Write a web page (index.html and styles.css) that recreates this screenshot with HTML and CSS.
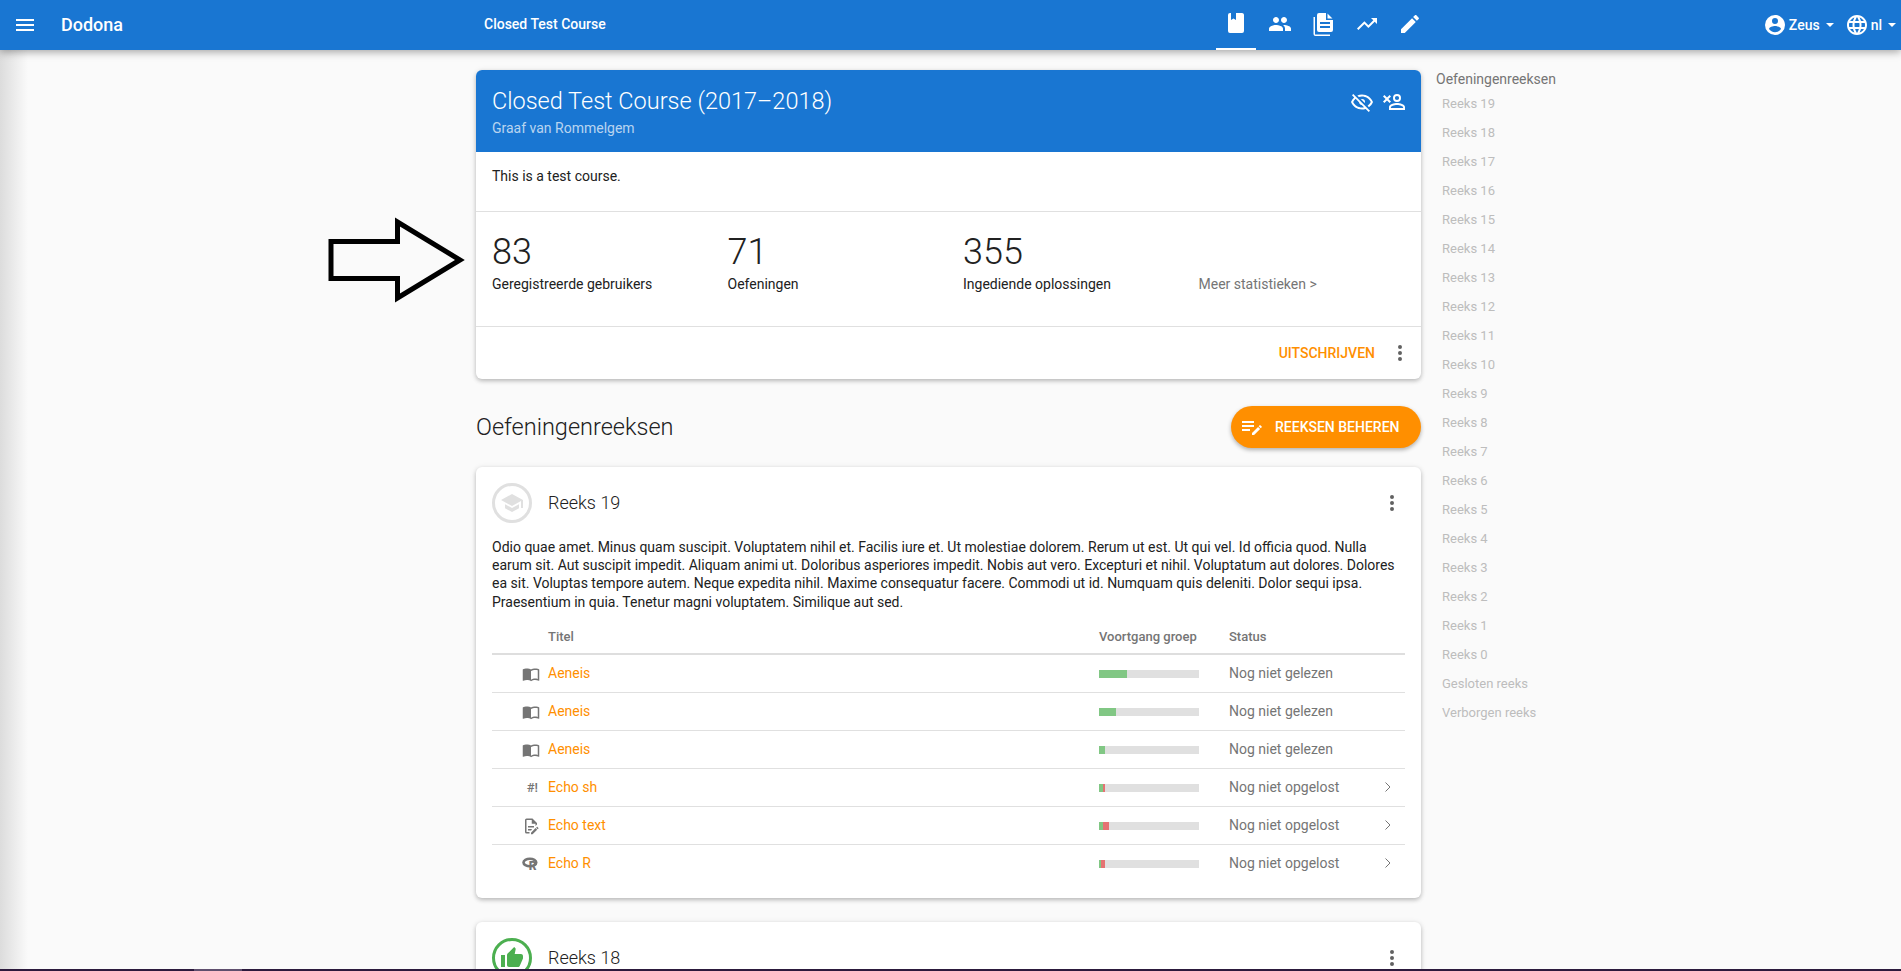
FILE: index.html
```html
<!DOCTYPE html>
<html lang="nl">
<head>
  <meta charset="UTF-8">
  <title>Closed Test Course - Dodona</title>
  <link rel="stylesheet" href="styles.css">
</head>
<body>

<nav class="navbar">
  <div class="nav-left">
    <svg class="icon-menu" viewBox="0 0 24 24"><path d="M3,6H21V8H3V6M3,11H21V13H3V11M3,16H21V18H3V16Z"/></svg>
    <span class="brand">Dodona</span>
  </div>
  <span class="nav-course">Closed Test Course</span>
  <div class="nav-tabs">
    <a class="nav-tab active"><svg viewBox="0 0 24 24"><path d="M18,22A2,2 0 0,0 20,20V4C20,2.89 19.1,2 18,2H12V9L9.5,7.5L7,9V2H6A2,2 0 0,0 4,4V20A2,2 0 0,0 6,22H18Z"/></svg></a>
    <a class="nav-tab"><svg viewBox="0 0 24 24"><path d="M16 11c1.66 0 2.99-1.34 2.99-3S17.66 5 16 5c-1.66 0-3 1.34-3 3s1.34 3 3 3zm-8 0c1.66 0 2.99-1.34 2.99-3S9.66 5 8 5C6.34 5 5 6.34 5 8s1.34 3 3 3zm0 2c-2.33 0-7 1.17-7 3.5V19h14v-2.5c0-2.33-4.67-3.5-7-3.5zm8 0c-.29 0-.62.02-.97.05 1.16.84 1.97 1.97 1.97 3.45V19h6v-2.5c0-2.33-4.67-3.5-7-3.5z"/></svg></a>
    <a class="nav-tab"><svg viewBox="0 0 24 24"><path fill-rule="evenodd" d="M15 1H8a2 2 0 0 0-2 2v15a2 2 0 0 0 2 2h12a2 2 0 0 0 2-2V8h-7zM9 10h10v2H9zM9 14h10v2H9z"/><path d="M16.500 1.500V6.500H21.500zM2.500 5H4V22.500H19V24H4.500a2 2 0 0 1-2-2z"/></svg></a>
    <a class="nav-tab"><svg viewBox="0 0 24 24"><path d="M16 6l2.29 2.29-4.88 4.88-4-4L2 16.59 3.41 18l6-6 4 4 6.3-6.29L22 12V6z"/></svg></a>
    <a class="nav-tab"><svg viewBox="0 0 24 24"><path d="M20.71 7.04c.39-.39.39-1.04 0-1.41l-2.34-2.34c-.37-.39-1.02-.39-1.41 0l-1.84 1.83 3.75 3.75M3 17.25V21h3.75L17.81 9.93l-3.75-3.75L3 17.25z"/></svg></a>
  </div>
  <div class="nav-right">
    <svg viewBox="0 0 24 24"><path d="M12,19.2C9.5,19.2 7.29,17.92 6,16C6.03,14 10,12.9 12,12.9C14,12.9 17.97,14 18,16C16.71,17.92 14.5,19.2 12,19.2M12,5A3,3 0 0,1 15,8A3,3 0 0,1 12,11A3,3 0 0,1 9,8A3,3 0 0,1 12,5M12,2A10,10 0 0,0 2,12A10,10 0 0,0 12,22A10,10 0 0,0 22,12C22,6.47 17.5,2 12,2Z"/></svg>
    <span class="nav-label">Zeus</span><span class="caret"></span>
    <svg class="globe" viewBox="0 0 24 24"><path d="M11.99 2C6.47 2 2 6.48 2 12s4.47 10 9.99 10C17.52 22 22 17.52 22 12S17.52 2 11.99 2zm6.93 6h-2.95c-.32-1.25-.78-2.45-1.38-3.56 1.84.63 3.37 1.91 4.33 3.56zM12 4.04c.83 1.2 1.48 2.53 1.91 3.96h-3.82c.43-1.43 1.08-2.76 1.91-3.96zM4.26 14C4.1 13.36 4 12.69 4 12s.1-1.36.26-2h3.38c-.08.66-.14 1.32-.14 2 0 .68.06 1.34.14 2H4.26zm.82 2h2.95c.32 1.25.78 2.45 1.38 3.56-1.84-.63-3.37-1.9-4.33-3.56zm2.95-8H5.08c.96-1.66 2.49-2.93 4.33-3.56C8.81 5.55 8.35 6.75 8.03 8zM12 19.96c-.83-1.2-1.48-2.53-1.91-3.96h3.82c-.43 1.43-1.08 2.76-1.91 3.96zM14.34 14H9.66c-.09-.66-.16-1.32-.16-2 0-.68.07-1.35.16-2h4.68c.09.65.16 1.32.16 2 0 .68-.07 1.34-.16 2zm.25 5.56c.6-1.11 1.06-2.31 1.38-3.56h2.95c-.96 1.65-2.49 2.93-4.33 3.56zM16.36 14c.08-.66.14-1.32.14-2 0-.68-.06-1.34-.14-2h3.38c.16.64.26 1.31.26 2s-.1 1.36-.26 2h-3.38z"/></svg>
    <span class="nav-label">nl</span><span class="caret"></span>
  </div>
</nav>

<div class="page">
  <main class="content">

    <section class="card">
      <div class="course-head">
        <div>
          <h1>Closed Test Course (2017–2018)</h1>
          <p class="course-sub">Graaf van Rommelgem</p>
        </div>
        <div class="course-actions">
          <svg viewBox="0 0 24 24"><path d="M2,5.27L3.28,4L20,20.72L18.73,22L15.65,18.92C14.5,19.3 13.28,19.5 12,19.5C7,19.5 2.73,16.39 1,12C1.69,10.24 2.79,8.69 4.19,7.46L2,5.27M12,9A3,3 0 0,1 15,12C15,12.35 14.94,12.69 14.83,13L11,9.17C11.31,9.06 11.65,9 12,9M12,4.5C17,4.5 21.27,7.61 23,12C22.18,14.08 20.79,15.88 19,17.19L17.58,15.76C18.94,14.82 20.06,13.54 20.82,12C19.17,8.64 15.76,6.5 12,6.5C10.91,6.5 9.84,6.68 8.84,7L7.3,5.47C8.74,4.85 10.33,4.5 12,4.5M3.18,12C4.83,15.36 8.24,17.5 12,17.5C12.69,17.5 13.37,17.43 14,17.29L11.72,15C10.29,14.85 9.15,13.71 9,12.28L5.6,8.87C4.61,9.72 3.78,10.78 3.18,12Z"/></svg>
          <svg viewBox="0 0 24 24"><path d="M15,4A4,4 0 0,0 11,8A4,4 0 0,0 15,12A4,4 0 0,0 19,8A4,4 0 0,0 15,4M15,5.9A2.1,2.1 0 0,1 17.1,8A2.1,2.1 0 0,1 15,10.1A2.1,2.1 0 0,1 12.9,8A2.1,2.1 0 0,1 15,5.9M15,13C12.33,13 7,14.33 7,17V20H23V17C23,14.33 17.67,13 15,13M15,14.9C17.97,14.9 21.1,16.36 21.1,17V18.1H8.9V17C8.9,16.36 12,14.9 15,14.9M1 6.41 2.41 5 5 7.59 7.59 5 9 6.41 6.41 9 9 11.59 7.59 13 5 10.41 2.41 13 1 11.59 3.59 9z"/></svg>
        </div>
      </div>
      <div class="course-text">This is a test course.</div>
      <div class="stats">
        <div class="stat"><div class="stat-num">83</div><div class="stat-label">Geregistreerde gebruikers</div></div>
        <div class="stat"><div class="stat-num">71</div><div class="stat-label">Oefeningen</div></div>
        <div class="stat"><div class="stat-num">355</div><div class="stat-label">Ingediende oplossingen</div></div>
        <div class="stat"><div class="stat-num">&nbsp;</div><div class="stat-label more">Meer statistieken &gt;</div></div>
      </div>
      <div class="course-foot">
        <a class="link-btn">UITSCHRIJVEN</a>
        <svg class="dots" viewBox="0 0 24 24"><path d="M12,16A2,2 0 0,1 14,18A2,2 0 0,1 12,20A2,2 0 0,1 10,18A2,2 0 0,1 12,16M12,10A2,2 0 0,1 14,12A2,2 0 0,1 12,14A2,2 0 0,1 10,12A2,2 0 0,1 12,10M12,4A2,2 0 0,1 14,6A2,2 0 0,1 12,8A2,2 0 0,1 10,6A2,2 0 0,1 12,4Z"/></svg>
      </div>
    </section>

    <div class="section-head">
      <h2>Oefeningenreeksen</h2>
      <a class="fab-btn">
        <svg viewBox="0 0 24 24"><path d="M2 6V8H14V6H2M2 10V12H14V10H2M20.04 10.13C19.9 10.13 19.76 10.19 19.65 10.3L18.65 11.3L20.7 13.35L21.7 12.35C21.92 12.14 21.92 11.79 21.7 11.58L20.42 10.3C20.31 10.19 20.18 10.13 20.04 10.13M18.07 11.88L12 17.94V20H14.06L20.12 13.93L18.07 11.88M2 14V16H10V14H2Z"/></svg>
        REEKSEN BEHEREN
      </a>
    </div>

    <section class="card series">
      <div class="series-head">
        <span class="series-badge"><svg viewBox="0 0 24 24"><path d="M5 13.18v4L12 21l7-3.82v-4L12 17l-7-3.82zM12 3L1 9l11 6 9-4.91V17h2V9L12 3z"/></svg></span>
        <h3>Reeks 19</h3>
        <svg class="dots" viewBox="0 0 24 24"><path d="M12,16A2,2 0 0,1 14,18A2,2 0 0,1 12,20A2,2 0 0,1 10,18A2,2 0 0,1 12,16M12,10A2,2 0 0,1 14,12A2,2 0 0,1 12,14A2,2 0 0,1 10,12A2,2 0 0,1 12,10M12,4A2,2 0 0,1 14,6A2,2 0 0,1 12,8A2,2 0 0,1 10,6A2,2 0 0,1 12,4Z"/></svg>
      </div>
      <p class="series-desc">Odio quae amet. Minus quam suscipit. Voluptatem nihil et. Facilis iure et. Ut molestiae dolorem. Rerum ut est. Ut qui vel. Id officia quod. Nulla earum sit. Aut suscipit impedit. Aliquam animi ut. Doloribus asperiores impedit. Nobis aut vero. Excepturi et nihil. Voluptatum aut dolores. Dolores ea sit. Voluptas tempore autem. Neque expedita nihil. Maxime consequatur facere. Commodi ut id. Numquam quis deleniti. Dolor sequi ipsa. Praesentium in quia. Tenetur magni voluptatem. Similique aut sed.</p>
      <table class="activities">
        <colgroup><col class="col-icon"><col class="col-title"><col class="col-progress"><col class="col-status"><col></colgroup>
        <thead>
          <tr><th></th><th>Titel</th><th>Voortgang groep</th><th>Status</th><th></th></tr>
        </thead>
        <tbody>
          <tr>
            <td class="type"><svg viewBox="0 0 24 24"><path d="M21 5c-1.11-.35-2.33-.5-3.5-.5-1.95 0-4.05.4-5.5 1.5-1.45-1.1-3.55-1.5-5.5-1.5S2.45 4.9 1 6v14.65c0 .25.25.5.5.5.1 0 .15-.05.25-.05C3.1 20.45 5.05 20 6.5 20c1.95 0 4.05.4 5.5 1.5 1.35-.85 3.8-1.5 5.5-1.5 1.65 0 3.35.3 4.75 1.05.1.05.15.05.25.05.25 0 .5-.25.5-.5V6c-.6-.45-1.25-.75-2-1zm0 13.5c-1.1-.35-2.3-.5-3.5-.5-1.7 0-4.15.65-5.5 1.5V8c1.35-.85 3.8-1.5 5.5-1.5 1.2 0 2.4.15 3.5.5v11.5z"/></svg></td>
            <td><a class="title">Aeneis</a></td>
            <td><div class="bar"><i class="ok" style="width:28px"></i></div></td>
            <td class="status">Nog niet gelezen</td><td></td>
          </tr>
          <tr>
            <td class="type"><svg viewBox="0 0 24 24"><path d="M21 5c-1.11-.35-2.33-.5-3.5-.5-1.95 0-4.05.4-5.5 1.5-1.45-1.1-3.55-1.5-5.5-1.5S2.45 4.9 1 6v14.65c0 .25.25.5.5.5.1 0 .15-.05.25-.05C3.1 20.45 5.05 20 6.5 20c1.95 0 4.05.4 5.5 1.5 1.35-.85 3.8-1.5 5.5-1.5 1.65 0 3.35.3 4.75 1.05.1.05.15.05.25.05.25 0 .5-.25.5-.5V6c-.6-.45-1.25-.75-2-1zm0 13.5c-1.1-.35-2.3-.5-3.5-.5-1.7 0-4.15.65-5.5 1.5V8c1.35-.85 3.8-1.5 5.5-1.5 1.2 0 2.4.15 3.5.5v11.5z"/></svg></td>
            <td><a class="title">Aeneis</a></td>
            <td><div class="bar"><i class="ok" style="width:17px"></i></div></td>
            <td class="status">Nog niet gelezen</td><td></td>
          </tr>
          <tr>
            <td class="type"><svg viewBox="0 0 24 24"><path d="M21 5c-1.11-.35-2.33-.5-3.5-.5-1.95 0-4.05.4-5.5 1.5-1.45-1.1-3.55-1.5-5.5-1.5S2.45 4.9 1 6v14.65c0 .25.25.5.5.5.1 0 .15-.05.25-.05C3.1 20.45 5.05 20 6.5 20c1.95 0 4.05.4 5.5 1.5 1.35-.85 3.8-1.5 5.5-1.5 1.65 0 3.35.3 4.75 1.05.1.05.15.05.25.05.25 0 .5-.25.5-.5V6c-.6-.45-1.25-.75-2-1zm0 13.5c-1.1-.35-2.3-.5-3.5-.5-1.7 0-4.15.65-5.5 1.5V8c1.35-.85 3.8-1.5 5.5-1.5 1.2 0 2.4.15 3.5.5v11.5z"/></svg></td>
            <td><a class="title">Aeneis</a></td>
            <td><div class="bar"><i class="ok" style="width:6px"></i></div></td>
            <td class="status">Nog niet gelezen</td><td></td>
          </tr>
          <tr>
            <td class="type"><span class="shebang">#!</span></td>
            <td><a class="title">Echo sh</a></td>
            <td><div class="bar"><i class="ok" style="width:4px"></i><i class="bad" style="width:2px"></i></div></td>
            <td class="status">Nog niet opgelost</td>
            <td class="go"><svg viewBox="0 0 8 12"><path d="M1.5 1.5 6 6l-4.500 4.500"/></svg></td>
          </tr>
          <tr>
            <td class="type"><svg viewBox="0 0 24 24"><path d="M8,12H16V14H8V12M10,20H6V4H13V9H18V12.1L20,10.1V8L14,2H6A2,2 0 0,0 4,4V20A2,2 0 0,0 6,22H10V20M8,18H12.1L13,17.1V16H8V18M20.2,13C20.3,13 20.5,13.1 20.6,13.2L21.9,14.5C22.1,14.7 22.1,15.1 21.9,15.3L20.9,16.3L18.8,14.2L19.8,13.2C19.9,13.1 20,13 20.2,13M20.2,16.9L14.1,23H12V20.9L18.1,14.8L20.2,16.9Z"/></svg></td>
            <td><a class="title">Echo text</a></td>
            <td><div class="bar"><i class="ok" style="width:4px"></i><i class="bad" style="width:6px"></i></div></td>
            <td class="status">Nog niet opgelost</td>
            <td class="go"><svg viewBox="0 0 8 12"><path d="M1.5 1.5 6 6l-4.500 4.500"/></svg></td>
          </tr>
          <tr>
            <td class="type"><svg class="r-logo" viewBox="0 0 24 24"><ellipse cx="10.500" cy="10" rx="8.500" ry="5"/><text x="9" y="20">R</text></svg></td>
            <td><a class="title">Echo R</a></td>
            <td><div class="bar"><i class="ok" style="width:2px"></i><i class="bad" style="width:4px"></i></div></td>
            <td class="status">Nog niet opgelost</td>
            <td class="go"><svg viewBox="0 0 8 12"><path d="M1.5 1.5 6 6l-4.500 4.500"/></svg></td>
          </tr>
        </tbody>
      </table>
    </section>

    <section class="card series">
      <div class="series-head">
        <span class="series-badge done"><svg viewBox="0 0 24 24"><path d="M1 21h4V9H1v12zm22-11c0-1.100-.9-2-2-2h-6.310l.95-4.570.03-.32c0-.41-.17-.79-.44-1.060L14.170 1 7.590 7.590C7.220 7.950 7 8.450 7 9v10c0 1.100.9 2 2 2h9c.83 0 1.540-.5 1.840-1.220l3.020-7.050c.09-.23.14-.47.14-.73v-2z"/></svg></span>
        <h3>Reeks 18</h3>
        <svg class="dots" viewBox="0 0 24 24"><path d="M12,16A2,2 0 0,1 14,18A2,2 0 0,1 12,20A2,2 0 0,1 10,18A2,2 0 0,1 12,16M12,10A2,2 0 0,1 14,12A2,2 0 0,1 12,14A2,2 0 0,1 10,12A2,2 0 0,1 12,10M12,4A2,2 0 0,1 14,6A2,2 0 0,1 12,8A2,2 0 0,1 10,6A2,2 0 0,1 12,4Z"/></svg>
      </div>
    </section>
  </main>

  <aside class="toc">
    <div class="toc-head">Oefeningenreeksen</div>
    <a>Reeks 19</a>
    <a>Reeks 18</a>
    <a>Reeks 17</a>
    <a>Reeks 16</a>
    <a>Reeks 15</a>
    <a>Reeks 14</a>
    <a>Reeks 13</a>
    <a>Reeks 12</a>
    <a>Reeks 11</a>
    <a>Reeks 10</a>
    <a>Reeks 9</a>
    <a>Reeks 8</a>
    <a>Reeks 7</a>
    <a>Reeks 6</a>
    <a>Reeks 5</a>
    <a>Reeks 4</a>
    <a>Reeks 3</a>
    <a>Reeks 2</a>
    <a>Reeks 1</a>
    <a>Reeks 0</a>
    <a>Gesloten reeks</a>
    <a>Verborgen reeks</a>
  </aside>
</div>

<!-- annotation drawn on top of the screenshot -->
<svg class="arrow" viewBox="0 0 145 90"><path d="M6 26.500H72.500V7L135 45 72.500 83V63.500H6z"/></svg>
<div class="drawer-shade"></div>
<div class="bottom-strip"><span></span></div>

</body>
</html>
```

FILE: styles.css
```css
html, body {
  height: 971px;
  overflow: hidden;
}
body {
  margin: 0;
  background: #fafafa;
  font-family: Roboto, sans-serif;
  font-size: 14px;
  line-height: 18.2px;
  color: #212121;
}
a {
  text-decoration: none;
}
h1, h2, h3, p {
  margin: 0;
}

/* navbar */
.navbar {
  height: 50px;
  background: #1976d2;
  color: #fff;
  display: flex;
  align-items: center;
  box-shadow: 0 2px 8px rgba(0,0,0,0.35);
  position: relative;
  z-index: 2;
}
.navbar svg {
  width: 24px;
  height: 24px;
  fill: #fff;
}
.nav-left {
  width: 484px;
  display: flex;
  align-items: center;
  padding-left: 13px;
  box-sizing: border-box;
  flex: none;
}
.brand {
  margin-left: 24px;
  font-size: 18px;
  font-weight: 500;
}
.nav-course {
  width: 730px;
  flex: none;
  font-size: 14px;
  font-weight: 500;
  margin-bottom: 2px;
}
.nav-tabs {
  display: flex;
  height: 50px;
  margin-left: 2px;
}
.nav-tab {
  width: 43.500px;
  display: flex;
  justify-content: center;
  align-items: center;
  box-sizing: border-box;
  padding-bottom: 2px;
}
.nav-tab.active {
  width: 40px;
  border-bottom: 2px solid #fff;
  margin-right: 2px;
}
.nav-right {
  margin-left: auto;
  display: flex;
  align-items: center;
  padding-right: 5px;
}
.nav-label {
  font-size: 14px;
  font-weight: 500;
  margin-left: 2px;
}
.caret {
  width: 0;
  height: 0;
  border: 4px solid transparent;
  border-top-color: #fff;
  border-bottom-width: 0;
  margin-left: 6px;
}
.globe {
  margin-left: 11px;
}

/* layout */
.page {
  display: flex;
  height: 921px;
  box-sizing: border-box;
  overflow: hidden;
  padding: 20px 0 0 476px;
}
.content {
  width: 945px;
  flex: none;
}
.card {
  background: #fff;
  border-radius: 6px;
  box-shadow: 0 2px 4px rgba(0,0,0,0.2), 0 1px 6px rgba(0,0,0,0.1);
  overflow: hidden;
}

/* course card */
.course-head {
  height: 82px;
  box-sizing: border-box;
  background: #1976d2;
  color: #fff;
  padding: 2px 16px 0;
  display: flex;
  justify-content: space-between;
  align-items: center;
}
.course-head h1 {
  font-size: 23.500px;
  font-weight: 300;
  line-height: 30px;
}
.course-sub {
  font-size: 14px;
  color: rgba(255,255,255,0.7);
  margin-top: 3px;
}
.course-actions {
  display: flex;
  gap: 8px;
  margin-right: -1px;
  margin-bottom: 20px;
}
.course-actions svg {
  width: 24px;
  height: 24px;
  fill: #fff;
}
.course-text {
  height: 60px;
  box-sizing: border-box;
  padding: 15px 16px 0;
  border-bottom: 1px solid #e0e0e0;
}
.stats {
  height: 115px;
  box-sizing: border-box;
  padding: 20px 16px 0;
  display: grid;
  grid-template-columns: repeat(4, 235.500px);
  border-bottom: 1px solid #e0e0e0;
}
.stat-num {
  font-size: 36px;
  font-weight: 300;
  line-height: 40px;
}
.stat-label {
  margin-top: 3px;
}
.more {
  color: #757575;
}
.course-foot {
  height: 52px;
  display: flex;
  justify-content: flex-end;
  align-items: center;
  padding-right: 9px;
}
.link-btn {
  color: #ff8f00;
  font-weight: 500;
}
.dots {
  width: 24px;
  height: 24px;
  fill: #616161;
}
.course-foot .dots {
  margin-left: 13px;
}

/* section title */
.section-head {
  height: 88px;
  box-sizing: border-box;
  padding-top: 8px;
  display: flex;
  justify-content: space-between;
  align-items: center;
}
.section-head h2 {
  font-size: 23.500px;
  font-weight: 300;
}
.fab-btn {
  width: 190px;
  height: 42px;
  box-sizing: border-box;
  background: #ff8f00;
  color: #fff;
  border-radius: 21px;
  display: flex;
  align-items: center;
  padding-left: 9px;
  gap: 11px;
  font-weight: 500;
  box-shadow: 0 2px 4px rgba(0,0,0,0.3);
}
.fab-btn svg {
  width: 24px;
  height: 24px;
  fill: #fff;
}

/* series */
.series {
  padding: 16px;
  margin-bottom: 24px;
}
.series-head {
  display: flex;
  align-items: center;
  height: 40px;
}
.series-head h3 {
  font-size: 18px;
  font-weight: 300;
  margin-left: 16px;
  flex: 1;
}
.series-head .dots {
  margin-right: 1px;
}
.series-badge {
  width: 40px;
  height: 40px;
  box-sizing: border-box;
  border: 3px solid #e0e0e0;
  border-radius: 50%;
  display: flex;
  align-items: center;
  justify-content: center;
}
.series-badge svg {
  width: 24px;
  height: 24px;
  fill: #e0e0e0;
}
.series-badge.done {
  border-color: #4caf50;
}
.series-badge.done svg {
  fill: #4caf50;
}
.series-desc {
  margin-top: 15px;
}

/* activities table */
.activities {
  width: 100%;
  table-layout: fixed;
  border-collapse: collapse;
  margin-top: 6px;
}
.col-icon {
  width: 56px;
}
.col-title {
  width: 551px;
}
.col-progress {
  width: 130px;
}
.col-status {
  width: 136px;
}
.activities th {
  height: 31px;
  text-align: left;
  font-size: 13px;
  font-weight: 500;
  color: #757575;
  padding: 5px 0 0;
  border-bottom: 2px solid #dedede;
}
.activities td {
  height: 37px;
  padding: 0;
  border-bottom: 1px solid #e0e0e0;
}
.activities tr:last-child td {
  border-bottom: none;
}
.type {
  text-align: right;
  padding-right: 8px !important;
  color: #757575;
}
.type svg {
  width: 18px;
  height: 18px;
  fill: #757575;
  vertical-align: middle;
}
.shebang {
  font-size: 13px;
  font-weight: 500;
  margin-right: 2px;
}
.r-logo ellipse {
  fill: none;
  stroke: #757575;
  stroke-width: 3.500;
}
.r-logo text {
  font-family: Roboto, sans-serif;
  font-size: 16px;
  font-weight: 900;
  fill: #757575;
}
.title {
  color: #ff8f00;
}
.status {
  color: #757575;
}
.bar {
  width: 100px;
  height: 8px;
  background: #e0e0e0;
  display: flex;
  margin-top: 2px;
}
.bar i {
  display: block;
  height: 8px;
}
.ok {
  background: #81c784;
}
.bad {
  background: #e57373;
}
.go svg {
  display: block;
  width: 8px;
  height: 12px;
  margin-left: 19px;
  fill: none;
  stroke: #757575;
  stroke-width: 1;
}

/* table of contents on the right */
.toc {
  margin-left: 15px;
  width: 200px;
}
.toc-head {
  font-size: 14px;
  line-height: 19px;
  color: #757575;
}
.toc a {
  display: block;
  font-size: 13px;
  color: #bdbdbd;
  line-height: 29px;
  padding-left: 6px;
}

/* overlays */
.arrow {
  position: absolute;
  left: 325px;
  top: 215px;
  width: 145px;
  height: 90px;
  fill: none;
  stroke: #000;
  stroke-width: 5;
}
.drawer-shade {
  position: absolute;
  left: 0;
  top: 50px;
  bottom: 0;
  width: 28px;
  background: linear-gradient(to right, #dcdcdc, #fafafa);
}
.bottom-strip {
  position: absolute;
  left: 0;
  right: 0;
  bottom: 0;
  height: 2px;
  background: #2c1a3d;
}
.bottom-strip span {
  display: block;
  width: 48px;
  height: 2px;
  margin-left: 194px;
  background: #5f4f6e;
}
```
